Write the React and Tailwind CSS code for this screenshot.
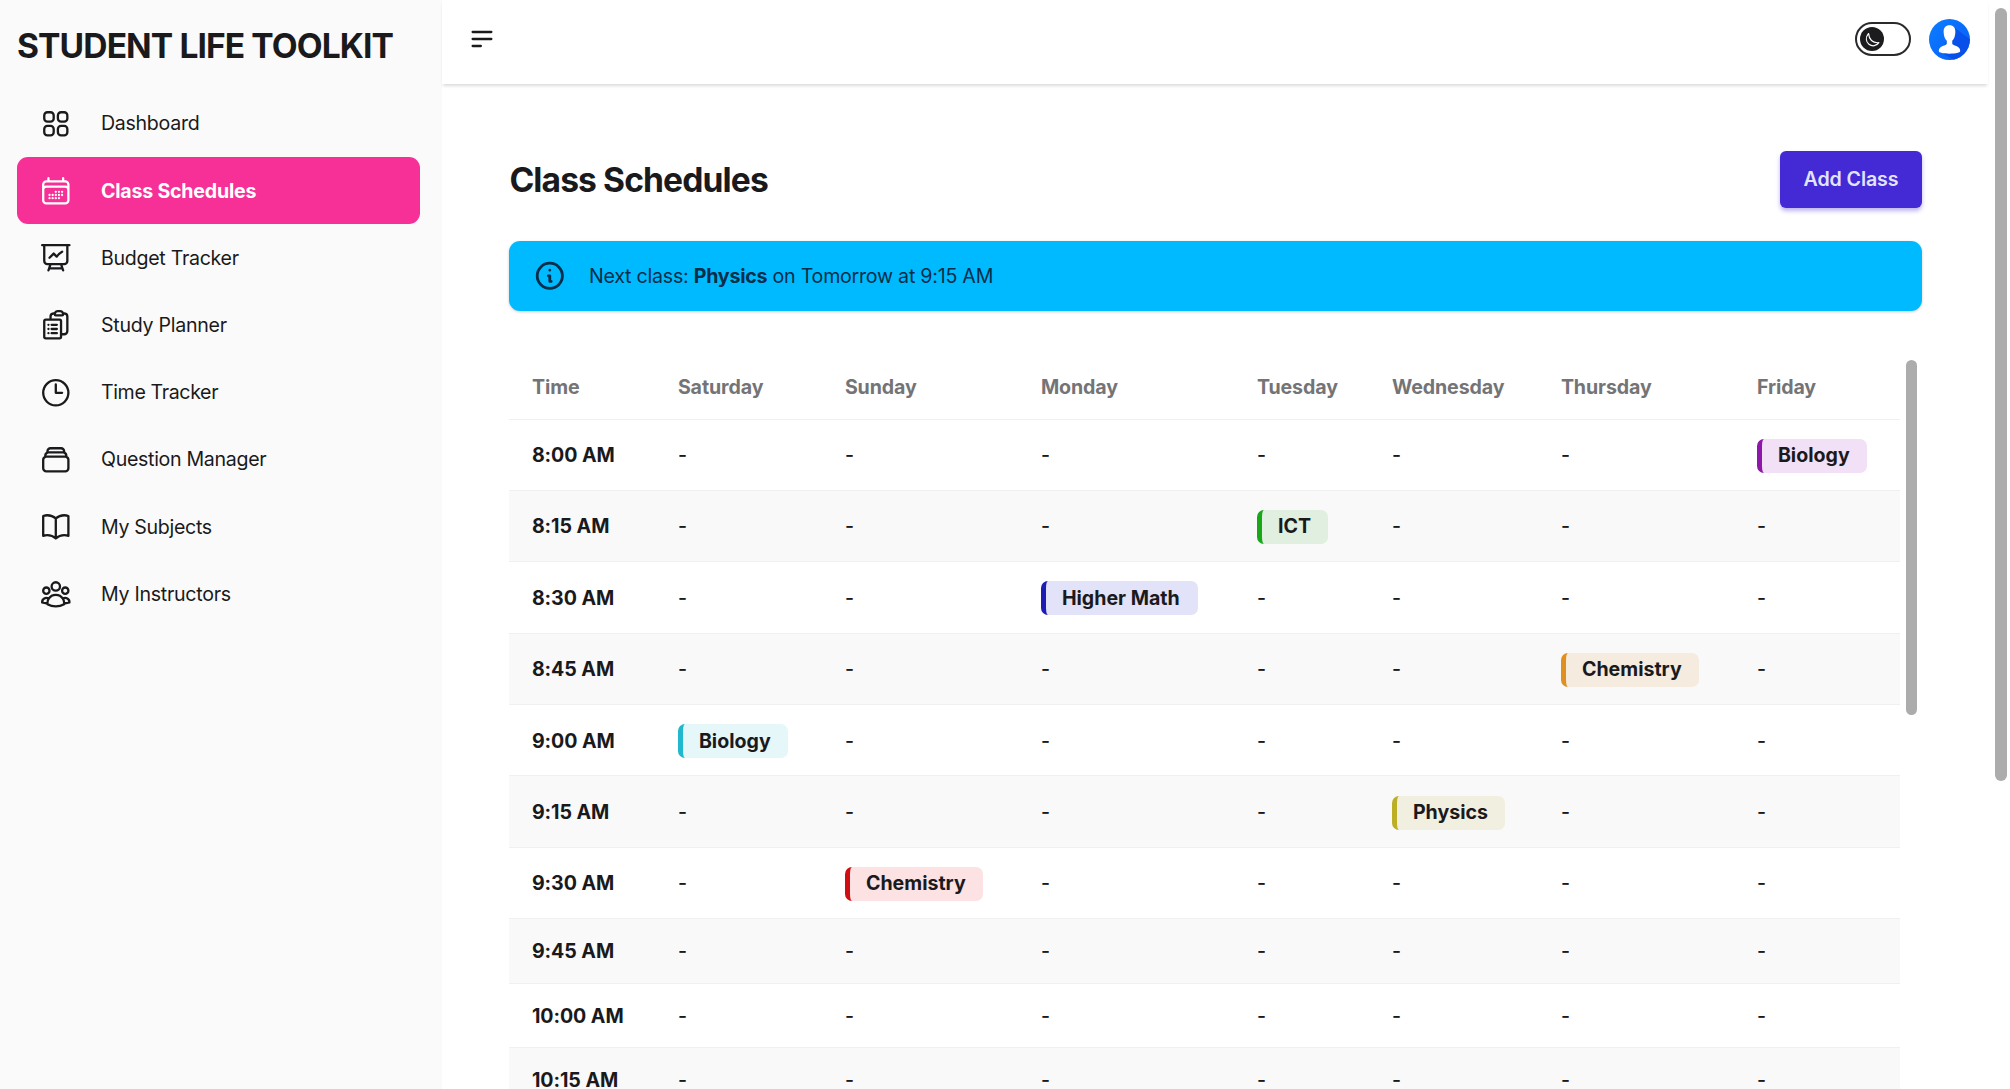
import React from "react";
import {
  HiOutlineSquares2X2,
  HiOutlineCalendarDays,
  HiOutlinePresentationChartLine,
  HiOutlineClipboardDocumentList,
  HiOutlineClock,
  HiOutlineRectangleStack,
  HiOutlineBookOpen,
  HiOutlineUserGroup,
} from "react-icons/hi2";
import { HiOutlineMenuAlt2 } from "react-icons/hi";

const NAV = [
  { label: "Dashboard", Icon: HiOutlineSquares2X2, track: "tracking-[-0.3px]" },
  { label: "Class Schedules", Icon: HiOutlineCalendarDays, active: true, track: "tracking-[-0.22px]" },
  { label: "Budget Tracker", Icon: HiOutlinePresentationChartLine, track: "tracking-[-0.3px]" },
  { label: "Study Planner", Icon: HiOutlineClipboardDocumentList, track: "tracking-[-0.28px]" },
  { label: "Time Tracker", Icon: HiOutlineClock, track: "tracking-[-0.38px]" },
  { label: "Question Manager", Icon: HiOutlineRectangleStack, track: "tracking-[-0.32px]" },
  { label: "My Subjects", Icon: HiOutlineBookOpen, track: "tracking-[-0.32px]" },
  { label: "My Instructors", Icon: HiOutlineUserGroup, track: "tracking-[-0.28px]" },
];

const DAYS = ["Saturday", "Sunday", "Monday", "Tuesday", "Wednesday", "Thursday", "Friday"];

const ROWS = [
  { time: "8:00 AM", day: 6, subject: "Biology", color: "border-[#8e16a8] bg-[#f2e1f6]", w: "w-[110px]" },
  { time: "8:15 AM", day: 3, subject: "ICT", color: "border-[#16a816] bg-[#e0efe0]", w: "w-[71px]" },
  { time: "8:30 AM", day: 2, subject: "Higher Math", color: "border-[#1d1db5] bg-[#e2e2f8]", w: "w-[157px]" },
  { time: "8:45 AM", day: 5, subject: "Chemistry", color: "border-[#e0901e] bg-[#f6ebdf]", w: "w-[138px]" },
  { time: "9:00 AM", day: 0, subject: "Biology", color: "border-[#1fb8cd] bg-[#e6f7fa]", w: "w-[110px]" },
  { time: "9:15 AM", day: 4, subject: "Physics", color: "border-[#bcae25] bg-[#f1efdf]", w: "w-[113px]" },
  { time: "9:30 AM", day: 1, subject: "Chemistry", color: "border-[#d00d12] bg-[#fce2e2]", w: "w-[138px]" },
  { time: "9:45 AM" },
  { time: "10:00 AM" },
  { time: "10:15 AM" },
];

function Sidebar() {
  return (
    <aside className="flex w-[442px] shrink-0 flex-col bg-[#fafafa] px-[17px] pt-[24px]">
      <h1 className="h-[44px] whitespace-nowrap text-[33.6px] leading-[44px] font-bold tracking-[-0.9px]">
        STUDENT LIFE TOOLKIT
      </h1>
      <nav className="mt-[22px] flex w-[403px] flex-col">
        {NAV.map(({ label, Icon, active, track }) => (
          <a
            key={label}
            className={`flex h-[67.2px] items-center gap-[28px] rounded-[11px] pl-[22.4px] text-[19.6px] ${track} ${
              active ? "bg-[#f63096] font-bold text-white" : ""
            }`}
          >
            <Icon className="size-[33.6px] shrink-0 [stroke-width:1.65]" />
            <span className="pt-px">{label}</span>
          </a>
        ))}
      </nav>
    </aside>
  );
}

function ThemeToggle() {
  return (
    <div className="flex h-[34px] w-[56px] items-center rounded-full border-2 border-[#2a2a2c] pl-[3px]">
      <span className="flex size-[24px] items-center justify-center rounded-full bg-[#1c1c1e]">
        <svg viewBox="0 0 24 24" className="size-[17px]" fill="none" stroke="white" strokeWidth="1.7" strokeLinejoin="round">
          <path d="M6.5 3.5C2 9 2.5 15 7 18.700c4.700 3.600 10.700 2.600 14-2.200-9 .8-14-4.500-14.500-13Z" />
        </svg>
      </span>
    </div>
  );
}

function Avatar() {
  return (
    <svg viewBox="0 0 42 42" className="size-[41px]">
      <defs>
        <linearGradient id="avatarBlue" x1="0" y1="0" x2="1" y2="1">
          <stop offset="0" stopColor="#0a80ff" />
          <stop offset="0.5" stopColor="#0a6cfb" />
          <stop offset="1" stopColor="#0a5cf5" />
        </linearGradient>
        <clipPath id="avatarClip">
          <circle cx="21" cy="21" r="21" />
        </clipPath>
      </defs>
      <circle cx="21" cy="21" r="21" fill="url(#avatarBlue)" />
      <path d="M25 8 42 21V42H26L12 34Z" fill="#0a4ae4" opacity=".75" clipPath="url(#avatarClip)" />
      <path
        fill="white"
        d="M21 6.500c-4 0-6.100 2.600-6 6.800.1 4.200 1.200 7.300 3.200 9v2.500c0 1-.8 1.600-2 2-4.200 1.200-6.200 3-6.200 6 0 1.800 4.700 2.700 11 2.700s11-.9 11-2.700c0-3-2-4.800-6.200-6-1.200-.4-2-1-2-2v-2.500c2-1.700 3.100-4.800 3.200-9 .1-4.200-2-6.800-6-6.800Z"
      />
    </svg>
  );
}

function Header() {
  return (
    <header className="flex h-[84px] w-[1546px] shrink-0 justify-between bg-white pr-[18px] pl-[26px] shadow-[0_3px_3px_-1px_rgba(0,0,0,0.14)]">
      <HiOutlineMenuAlt2 className="mt-[25px] size-[28px]" />
      <div className="mt-[18.5px] flex h-[41px] items-center gap-[18px]">
        <ThemeToggle />
        <Avatar />
      </div>
    </header>
  );
}

function Schedule() {
  return (
    <div className="mt-[49px] flex h-[729px] items-start">
      <table className="w-[1391px] table-fixed border-collapse text-left text-[19.6px]">
        <colgroup>
          <col className="w-[146px]" />
          <col className="w-[167px]" />
          <col className="w-[196px]" />
          <col className="w-[216px]" />
          <col className="w-[135px]" />
          <col className="w-[169px]" />
          <col className="w-[196px]" />
          <col className="w-[166px]" />
        </colgroup>
        <thead>
          <tr className="h-[59px] border-b border-[#f0f0f0] text-[#747476]">
            <th className="pb-[4px] pl-[22.5px] font-bold tracking-[-0.05px]">Time</th>
            {DAYS.map((d) => (
              <th key={d} className="pb-[4px] pl-[22.5px] font-bold tracking-[-0.1px]">{d}</th>
            ))}
          </tr>
        </thead>
        <tbody>
          {ROWS.map((r, i) => (
            <tr
              key={r.time}
              className={`border-b border-[#f0f0f0] ${i % 2 ? "bg-[#f9f9f9]" : ""} ${r.subject ? "h-[71.4px]" : "h-[64.4px]"}`}
            >
              <td className="pt-[2px] pl-[22.5px] font-bold tracking-[-0.05px]">{r.time}</td>
              {DAYS.map((d, k) => (
                <td key={d} className="pt-[2px] pl-[22.5px]">
                  {r.subject && r.day === k ? (
                    <div
                      className={`flex h-[34px] items-center rounded-[7px] border-l-[5px] pl-[16px] font-bold whitespace-nowrap ${r.color} ${r.w}`}
                    >
                      {r.subject}
                    </div>
                  ) : (
                    <span className="font-medium">-</span>
                  )}
                </td>
              ))}
            </tr>
          ))}
        </tbody>
      </table>
      <div className="ml-[5.5px] h-[355px] w-[11.5px] shrink-0 rounded-full bg-[#acacac]" />
    </div>
  );
}

export default function App() {
  return (
    <div className="flex h-[1089px] w-[2010px] overflow-hidden bg-white font-['Inter',sans-serif] text-[#1a1a1c]">
      <Sidebar />
      <div className="flex w-[1552.5px] flex-col">
        <Header />
        <main className="flex w-[1547px] flex-col pt-[67px] pr-[67px] pl-[67.4px]">
          <div className="flex h-[57px] items-center justify-between">
            <h2 className="pt-[2px] text-[33.6px] font-bold tracking-[-0.88px]">Class Schedules</h2>
            <button className="h-[57px] w-[142px] rounded-[6px] bg-[#432ad4] text-[19.6px] font-semibold tracking-[-0.1px] text-[#e2e4ff] shadow-[0_3px_4px_rgba(67,42,212,0.35)]">
              Add Class
            </button>
          </div>
          <div className="mt-[33px] flex h-[70px] items-center rounded-[11px] bg-[#00baff] pl-[23.5px] text-[19.6px] text-[#042e49] shadow-[0_1px_3px_rgba(0,0,0,0.2)]">
            <svg viewBox="0 0 24 24" className="size-[33.6px]" fill="none" stroke="currentColor" strokeWidth="2" strokeLinecap="round" strokeLinejoin="round">
              <path d="M13 16h-1v-4h-1m1-4h.01M21 12a9 9 0 1 1-18 0 9 9 0 0 1 18 0z" />
            </svg>
            <p className="ml-[22.5px] pt-px tracking-[-0.23px]">
              Next class: <strong className="font-bold">Physics</strong> on Tomorrow at 9:15 AM
            </p>
          </div>
          <Schedule />
        </main>
      </div>
      <div className="mt-[8px] h-[773px] w-[12px] shrink-0 rounded-full bg-[#acacac]" />
    </div>
  );
}
